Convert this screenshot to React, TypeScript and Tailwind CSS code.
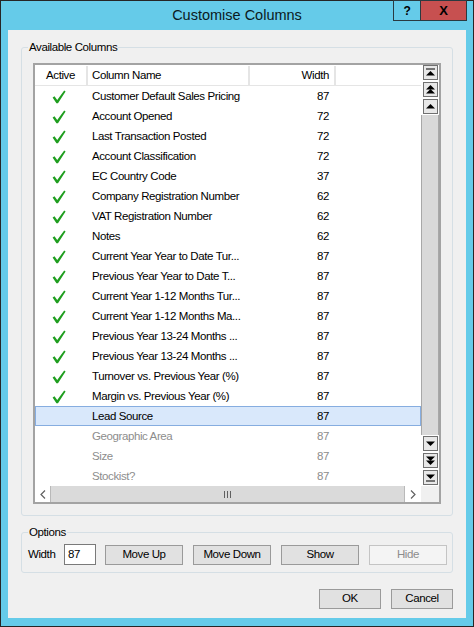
import type { ReactNode } from "react";

type ColumnRow = {
  name: string;
  width: number;
  active: boolean;
  enabled: boolean;
};

const rows: ColumnRow[] = [
  { name: "Customer Default Sales Pricing", width: 87, active: true, enabled: true },
  { name: "Account Opened", width: 72, active: true, enabled: true },
  { name: "Last Transaction Posted", width: 72, active: true, enabled: true },
  { name: "Account Classification", width: 72, active: true, enabled: true },
  { name: "EC Country Code", width: 37, active: true, enabled: true },
  { name: "Company Registration Number", width: 62, active: true, enabled: true },
  { name: "VAT Registration Number", width: 62, active: true, enabled: true },
  { name: "Notes", width: 62, active: true, enabled: true },
  { name: "Current Year Year to Date Tur...", width: 87, active: true, enabled: true },
  { name: "Previous Year Year to Date T...", width: 87, active: true, enabled: true },
  { name: "Current Year 1-12 Months Tur...", width: 87, active: true, enabled: true },
  { name: "Current Year 1-12 Months Ma...", width: 87, active: true, enabled: true },
  { name: "Previous Year 13-24 Months ...", width: 87, active: true, enabled: true },
  { name: "Previous Year 13-24 Months ...", width: 87, active: true, enabled: true },
  { name: "Turnover vs. Previous Year (%)", width: 87, active: true, enabled: true },
  { name: "Margin vs. Previous Year (%)", width: 87, active: true, enabled: true },
  { name: "Lead Source", width: 87, active: false, enabled: true },
  { name: "Geographic Area", width: 87, active: false, enabled: false },
  { name: "Size", width: 87, active: false, enabled: false },
  { name: "Stockist?", width: 87, active: false, enabled: false },
];

const SELECTED_INDEX = 16;

const CheckMark = () => (
  <svg width="14" height="14" viewBox="0 0 14 14">
    <path
      d="M0.6 7.4 L2.5 6.2 L5.2 10 L12.2 0.6 L13.6 1.5 L6 13.2 L4.4 13.2 Z"
      fill="#1f9e1f"
    />
  </svg>
);

const ScrollButton = ({ children }: { children: ReactNode }) => (
  <div className="flex h-[15px] w-[15px] items-center justify-center border border-[#707070] bg-[#e8e8e8]">
    <svg width="11" height="11" viewBox="0 0 11 11" fill="#000">
      {children}
    </svg>
  </div>
);

const GroupBox = ({
  label,
  className,
  children,
}: {
  label: string;
  className: string;
  children: ReactNode;
}) => (
  <div className={`relative rounded-[3px] border border-[#d5dfe5] ${className}`}>
    <span className="absolute -top-[8px] left-[6px] bg-[#f0f0f0] px-[1px] leading-[14px]">
      {label}
    </span>
    {children}
  </div>
);

const DialogButton = ({
  label,
  width,
  disabled,
}: {
  label: string;
  width: string;
  disabled?: boolean;
}) => (
  <div
    className={`flex h-[20px] items-center justify-center border ${width} ${
      disabled
        ? "border-[#c4c4c4] bg-[#f4f4f4] text-[#8c8c8c]"
        : "border-[#9a9a9a] bg-[#e1e1e1] text-black"
    }`}
  >
    {label}
  </div>
);

export default function App() {
  return (
    <div
      className="h-[627px] w-[474px] border border-[#262626] bg-[#65cbe9] text-[11.5px] tracking-[-0.4px] text-black"
      style={{ fontFamily: '"Liberation Sans", Arial, sans-serif' }}
    >
      {/* title bar */}
      <div className="relative flex h-[29px] items-center justify-center">
        <span className="text-[14.5px] tracking-normal text-[#0b1a22]">Customise Columns</span>
        <div className="absolute -top-[1px] right-[6px] flex h-[21px]">
          <div className="flex w-[28px] items-center justify-center border border-[#2a3a40] text-[12px] font-bold">
            ?
          </div>
          <div className="-ml-[1px] flex w-[47px] items-center justify-center border border-[#2a3a40] bg-[#c75050] text-[13px] font-bold">
            X
          </div>
        </div>
      </div>

      {/* client area */}
      <div className="ml-[7px] h-[588px] w-[458px] bg-[#f0f0f0] px-[13px] pt-[17px]">
        <GroupBox label="Available Columns" className="px-[11px] pb-[11px] pt-[15px]">
          <div className="flex h-[441px] border-2 border-[#a3a3a3] bg-white">
            <div className="flex w-[386px] flex-col">
              {/* header */}
              <div className="flex h-[21px] border-b border-[#e5e5e5] pt-[1px]">
                <div className="flex w-[53px] items-center justify-center border-r-2 border-[#e5e5e5]">
                  Active
                </div>
                <div className="flex w-[162px] items-center border-r-2 border-[#e5e5e5] pl-[4px]">
                  Column Name
                </div>
                <div className="flex w-[86px] items-center justify-end border-r-2 border-[#e5e5e5] pr-[5px]">
                  Width
                </div>
              </div>

              {/* rows */}
              <div className="flex-1 overflow-hidden">
                {rows.map((row, index) => (
                  <div
                    key={`${row.name}-${index}`}
                    className={`flex h-[20px] items-center pt-[1px] ${
                      index === SELECTED_INDEX
                        ? "bg-[#d9e8fb] shadow-[inset_0_0_0_1px_#86ade0]"
                        : ""
                    } ${row.enabled ? "text-black" : "text-[#8d8d8d]"}`}
                  >
                    <div className="flex w-[53px] items-center pl-[17px]">
                      {row.active && <CheckMark />}
                    </div>
                    <div className="w-[162px] whitespace-nowrap pl-[4px]">{row.name}</div>
                    <div className="w-[86px] pr-[7px] text-right">{row.width}</div>
                  </div>
                ))}
              </div>

              {/* horizontal scrollbar */}
              <div className="flex h-[16px]">
                <div className="flex w-[16px] items-center justify-center border-r border-[#b9b9b9] bg-white">
                  <svg width="6" height="9" viewBox="0 0 6 9">
                    <path d="M5 0.5 L1 4.5 L5 8.5" fill="none" stroke="#606060" strokeWidth="1.2" />
                  </svg>
                </div>
                <div className="flex flex-1 items-center justify-center bg-[#dadada]">
                  <div className="flex h-[7px] gap-[2px]">
                    <div className="w-[1px] bg-[#606060]" />
                    <div className="w-[1px] bg-[#606060]" />
                    <div className="w-[1px] bg-[#606060]" />
                  </div>
                </div>
                <div className="flex w-[17px] items-center justify-center border-l border-[#b9b9b9] bg-white">
                  <svg width="6" height="9" viewBox="0 0 6 9">
                    <path d="M1 0.5 L5 4.5 L1 8.5" fill="none" stroke="#606060" strokeWidth="1.2" />
                  </svg>
                </div>
              </div>
            </div>

            {/* vertical strip with move buttons */}
            <div className="flex w-[18px] flex-col">
              <div className="flex flex-col gap-[2px] pl-[2px]">
                <ScrollButton>
                  <rect x="1" y="1.5" width="9" height="1" />
                  <path d="M1 8.5 L5.5 4 L10 8.5 Z" />
                </ScrollButton>
                <ScrollButton>
                  <path d="M1 5.5 L5.5 1 L10 5.5 Z" />
                  <path d="M1 9.5 L5.5 5 L10 9.5 Z" />
                </ScrollButton>
                <ScrollButton>
                  <path d="M1 7.5 L5.5 3 L10 7.5 Z" />
                </ScrollButton>
              </div>
              <div className="my-[1px] flex-1 border-x border-[#a8a8a8] bg-[#d9d9d9]" />
              <div className="flex flex-col gap-[2px] pl-[2px]">
                <ScrollButton>
                  <path d="M1 3.5 L5.5 8 L10 3.5 Z" />
                </ScrollButton>
                <ScrollButton>
                  <path d="M1 1.5 L5.5 6 L10 1.5 Z" />
                  <path d="M1 5.5 L5.5 10 L10 5.5 Z" />
                </ScrollButton>
                <ScrollButton>
                  <path d="M1 2.5 L5.5 7 L10 2.5 Z" />
                  <rect x="1" y="8.5" width="9" height="1" />
                </ScrollButton>
              </div>
              <div className="mt-[1px] h-[16px] bg-[#f0f0f0]" />
            </div>
          </div>
        </GroupBox>

        <GroupBox label="Options" className="mt-[16px] pb-[7px] pl-[6px] pr-[5px] pt-[11px]">
          <div className="flex h-[21px] items-center">
            <span className="w-[36px]">Width</span>
            <div className="flex h-[21px] w-[32px] items-center border border-[#7a7a7a] bg-white pl-[3px]">
              87
            </div>
            <div className="ml-[9px] flex gap-[10px]">
              <DialogButton label="Move Up" width="w-[78px]" />
              <DialogButton label="Move Down" width="w-[78px]" />
              <DialogButton label="Show" width="w-[78px]" />
              <DialogButton label="Hide" width="w-[78px]" disabled />
            </div>
          </div>
        </GroupBox>

        <div className="mt-[16px] flex justify-end gap-[10px]">
          <DialogButton label="OK" width="w-[62px]" />
          <DialogButton label="Cancel" width="w-[62px]" />
        </div>
      </div>
    </div>
  );
}
